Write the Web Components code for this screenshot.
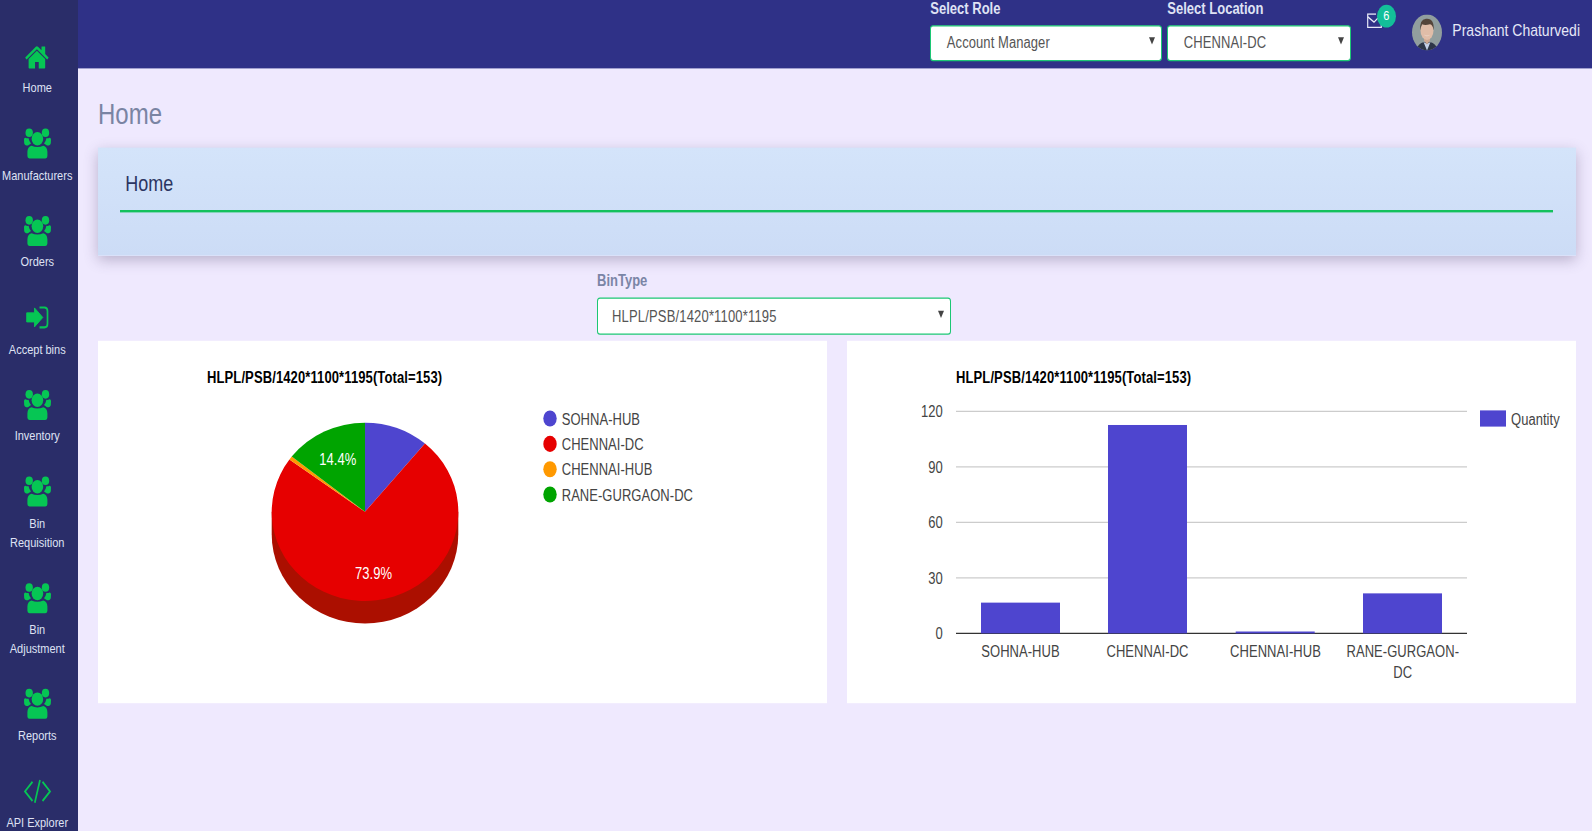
<!DOCTYPE html>
<html>
<head>
<meta charset="utf-8">
<title>Home</title>
<style>
  html, body { margin: 0; height: 100%; overflow: hidden; background: #efe9fe; }
  body { font-family: "Liberation Sans", Arial, sans-serif; }
</style>
</head>
<body>
<app-shell>
  <side-nav slot="nav">
    <nav-item icon="home">Home</nav-item>
    <nav-item icon="users">Manufacturers</nav-item>
    <nav-item icon="users">Orders</nav-item>
    <nav-item icon="signin">Accept bins</nav-item>
    <nav-item icon="users">Inventory</nav-item>
    <nav-item icon="users">Bin<br>Requisition</nav-item>
    <nav-item icon="users">Bin<br>Adjustment</nav-item>
    <nav-item icon="users">Reports</nav-item>
    <nav-item icon="code">API Explorer</nav-item>
  </side-nav>
  <top-bar slot="top" user="Prashant Chaturvedi" count="6">
    <select-box label="Select Role" tone="light" style="width:232px">Account Manager</select-box>
    <select-box label="Select Location" tone="light" style="width:184px">CHENNAI-DC</select-box>
  </top-bar>
  <home-page></home-page>
</app-shell>

<script>
  const ICONS = {
    home: '<svg viewBox="0 0 1792 1792" width="25.8" height="25.8"><path d="M1472 992v480q0 26-19 45t-45 19h-384v-384h-256v384h-384q-26 0-45-19t-19-45v-480q0-1 .5-3t.5-3l575-474 575 474q1 2 1 6zm223-69l-62 74q-8 9-21 11h-3q-13 0-21-7l-692-577-692 577q-12 8-24 7-13-2-21-11l-62-74q-8-10-7-23.500t11-21.500l719-599q32-26 76-26t76 26l244 204v-195q0-14 9-23t23-9h192q14 0 23 9t9 23v408l219 182q10 8 11 21.500t-7 23.500z"/></svg>',
    users: `<svg viewBox="0 0 27 25" width="27" height="25">
      <ellipse cx="5.2" cy="3.6" rx="3.7" ry="3.6"/><ellipse cx="21.5" cy="3.6" rx="3.7" ry="3.6"/>
      <path d="M0 9.2Q0 7.8 1.4 7.8Q3 8.4 4.6 8.2Q5.2 11 7 12.600L4 14.300Q.6 14.400 .2 12.400Z"/>
      <path d="M27 9.200Q27 7.800 25.600 7.800Q24 8.400 22.400 8.200Q21.800 11 20 12.600L23 14.300Q26.400 14.400 26.800 12.400Z"/>
      <ellipse cx="13.4" cy="8.600" rx="5.800" ry="5.600"/>
      <path d="M3.400 19.500Q3.600 15.200 7.500 14.400Q13.400 16.600 19.300 14.400Q23.200 15.200 23.400 19.500V23Q23.400 25 21.400 25H5.400Q3.400 25 3.400 23Z"/></svg>`,
    signin: `<svg viewBox="0 0 27 25" width="27" height="25">
      <path d="M2.700 8.700H10.500V4.600L18.800 12.500L10.500 20.400V16.300H2.700Z" stroke="currentColor" stroke-width=".8" stroke-linejoin="round"/>
      <path d="M15.500 4.200H20.500Q23.500 4.200 23.500 7.200V17.800Q23.500 20.800 20.500 20.800H15.500" fill="none" stroke="currentColor" stroke-width="1.700"/></svg>`,
    code: '<svg viewBox="0 0 27 25" width="27" height="25" fill="none" stroke="currentColor" stroke-width="1.700"><path d="M8.500 4.500L1 12.500L8.500 20.500"/><path d="M18.500 4.500L26 12.500L18.500 20.500"/><path d="M16 3L10.800 22"/></svg>'
  };

  class AppShell extends HTMLElement {
    constructor() {
      super();
      this.attachShadow({ mode: 'open' });
      this.shadowRoot.innerHTML = `
        <style>
          :host {
            display: grid;
            grid-template-columns: 78px 1fr;
            grid-template-rows: 56.500px 1fr;
            width: 1592px;
            height: 692.5px;
            overflow: hidden;
            background: #efe9fe;
            transform: scale(1, 1.2);
            transform-origin: 0 0;
          }
          .nav { grid-row: 1 / 3; min-height: 0; display: flex; }
        </style>
        <div class="nav"><slot name="nav"></slot></div>
        <slot name="top"></slot>
        <slot></slot>
      `;
    }
  }

  class SideNav extends HTMLElement {
    constructor() {
      super();
      this.attachShadow({ mode: 'open' });
      this.shadowRoot.innerHTML = `
        <style>
          :host {
            display: flex;
            flex-direction: column;
            gap: 26.200px;
            width: 78px;
            box-sizing: border-box;
            padding: 35px 3.500px 0 0;
            background: #2a2d69;
            overflow: hidden;
          }
        </style>
        <slot></slot>
      `;
    }
  }

  class NavItem extends HTMLElement {
    constructor() {
      super();
      this.attachShadow({ mode: 'open' });
    }

    connectedCallback() {
      this.shadowRoot.innerHTML = `
        <style>
          :host {
            display: block;
            text-align: center;
            color: #dfe2f4;
            font-size: 11px;
            line-height: 16px;
            flex: none;
            white-space: nowrap;
          }
          .icon {
            display: flex;
            align-items: center;
            justify-content: center;
            height: 25px;
            margin-bottom: 5.300px;
            color: #06c654;
            fill: #06c654;
          }
          .icon svg { overflow: visible; display: block; }
        </style>
        <div class="icon">${ICONS[this.getAttribute('icon')]}</div>
        <slot></slot>
      `;
    }
  }

  class SelectBox extends HTMLElement {
    constructor() {
      super();
      this.attachShadow({ mode: 'open' });
    }

    connectedCallback() {
      const light = this.getAttribute('tone') === 'light';
      this.shadowRoot.innerHTML = `
        <style>
          :host { display: block; box-sizing: border-box; flex: none; }
          .label {
            height: ${light ? 15 : 16}px;
            line-height: ${light ? 15 : 16}px;
            margin-bottom: ${light ? 5.5 : 6}px;
            font-size: 13px;
            font-weight: bold;
            color: ${light ? '#dfe2f4' : '#7b85a6'};
            white-space: nowrap;
          }
          .box {
            display: flex;
            align-items: center;
            justify-content: space-between;
            box-sizing: border-box;
            height: ${light ? 30.5 : 31}px;
            padding: 0 6px 0 ${light ? 15.5 : 14}px;
            background: #fff;
            border: 1.800px solid #1cc774;
            border-radius: 3px;
            font-size: 13px;
            letter-spacing: ${light ? 0.07 : 0.17}px;
            color: #555;
          }
          .arrow {
            width: 0;
            height: 0;
            margin-top: -3px;
            border-left: 3px solid transparent;
            border-right: 3px solid transparent;
            border-top: 6px solid #444;
          }
        </style>
        <div class="label">${this.getAttribute('label')}</div>
        <div class="box"><span><slot></slot></span><span class="arrow"></span></div>
      `;
    }
  }

  class TopBar extends HTMLElement {
    constructor() {
      super();
      this.attachShadow({ mode: 'open' });
    }

    connectedCallback() {
      this.shadowRoot.innerHTML = `
        <style>
          :host {
            display: flex;
            justify-content: flex-end;
            gap: 5px;
            height: 56.500px;
            box-sizing: border-box;
            padding-right: 12px;
            background: #2f3187;
            color: #e6e8f7;
          }
          .mail {
            position: relative;
            width: 15px;
            height: 12.500px;
            margin: 11px 0 0 11px;
            flex: none;
          }
          .mail svg { display: block; }
          .badge {
            position: absolute;
            left: 9.500px;
            top: -7px;
            width: 19px;
            height: 19px;
            border-radius: 50%;
            background: #13bf99;
            color: #fff;
            font-size: 11px;
            line-height: 19px;
            text-align: center;
          }
          .avatar { display: block; flex: none; margin: 11.700px 0 0 25px; }
          .name {
            margin: 16px 0 0 5px;
            line-height: 18px;
            font-size: 14px;
            white-space: nowrap;
          }
        </style>
        <slot></slot>
        <div class="mail">
          <svg viewBox="0 0 15 12.500" width="15" height="12.500" fill="none" stroke="#e6e8f7" stroke-width="1.200">
            <path d="M9 .7H.7V11.800H14.300V7"/><path d="M.9 3L7 7.500L11 4"/>
          </svg>
          <span class="badge">${this.getAttribute('count')}</span>
        </div>
        <svg class="avatar" viewBox="0 0 30 30" width="30" height="30">
          <defs><clipPath id="round"><ellipse cx="15" cy="15" rx="15" ry="15"/></clipPath></defs>
          <g clip-path="url(#round)">
            <rect width="30" height="30" fill="#919e9e"/>
            <path d="M4 30Q6 24 12 23H18Q24 24 26 30Z" fill="#2e3648"/>
            <path d="M11.500 23L15 30L18.500 23L15 24.500Z" fill="#c3cfe6"/>
            <path d="M12 22L15 25L18 22V19H12Z" fill="#cda892"/>
            <ellipse cx="15" cy="13.500" rx="6.500" ry="7.800" fill="#e0bda8"/>
            <path d="M8.300 13.500Q7.300 4 14 3.600Q22.500 2.800 21.700 13.500Q20.700 8.500 18 8.300Q13 9.300 10 8.300Q9 10 8.300 13.500Z" fill="#54453a"/>
            <path d="M11.500 16.500Q15 19 18.500 16.500Q17 18.300 15 18.300Q13 18.300 11.500 16.500Z" fill="#f5ebe4"/>
          </g>
        </svg>
        <div class="name">${this.getAttribute('user')}</div>
      `;
    }
  }

  class PageCard extends HTMLElement {
    constructor() {
      super();
      this.attachShadow({ mode: 'open' });
      this.shadowRoot.innerHTML = `
        <style>
          :host {
            display: block;
            box-sizing: border-box;
            height: 90.200px;
            padding: 0 23px 0 22px;
            background: linear-gradient(180deg, #d4e4fa, #ccdcf6);
            box-shadow: 0 4px 12px rgba(70, 60, 100, .32);
          }
          .title {
            padding: 20px 5.300px 10.600px;
            border-bottom: 2px solid #14c15d;
            font-size: 18px;
            line-height: 21.600px;
            color: #2c3562;
          }
        </style>
        <div class="title"><slot></slot></div>
      `;
    }
  }

  const SLICES = [
    { name: 'SOHNA-HUB', value: 17, color: '#4e45cf' },
    { name: 'CHENNAI-DC', value: 113, color: '#e60000' },
    { name: 'CHENNAI-HUB', value: 1, color: '#ff9900' },
    { name: 'RANE-GURGAON-DC', value: 22, color: '#00a400' }
  ];
  const CHART_TITLE = 'HLPL/PSB/1420*1100*1195(Total=153)';
  const SVG_STYLE = `
    :host { display: block; background: #fff; min-width: 0; }
    svg { display: block; font-family: "Liberation Sans", Arial, sans-serif; font-size: 13px; letter-spacing: .05px; }
    .title { font-weight: bold; fill: #000; letter-spacing: .12px; }
    text { fill: #444; }
  `;

  class PieChart extends HTMLElement {
    constructor() {
      super();
      this.attachShadow({ mode: 'open' });
    }

    connectedCallback() {
      const cx = 267, cy = 142.5, rx = 93.3, ry = 74.3, depth = 18.8;
      const total = SLICES.reduce((sum, s) => sum + s.value, 0);
      let turn = 0;
      const paths = SLICES.map((s) => {
        const from = turn * 2 * Math.PI;
        turn += s.value / total;
        const to = turn * 2 * Math.PI;
        const big = s.value / total > 0.5 ? 1 : 0;
        const x1 = cx + rx * Math.sin(from), y1 = cy - ry * Math.cos(from);
        const x2 = cx + rx * Math.sin(to), y2 = cy - ry * Math.cos(to);
        return `<path fill="${s.color}" d="M${cx} ${cy}L${x1} ${y1}A${rx} ${ry} 0 ${big} 1 ${x2} ${y2}Z"/>`;
      }).join('');
      const legend = SLICES.map((s, i) => {
        const y = 65.2 + i * 21.1;
        return `<ellipse cx="452" cy="${y - 0.4}" rx="6.700" ry="6.700" fill="${s.color}"/>
          <text x="463.700" y="${y + 4.6}">${s.name}</text>`;
      }).join('');
      this.shadowRoot.innerHTML = `
        <style>${SVG_STYLE}</style>
        <svg width="729" height="301.600">
          <text class="title" x="109" y="35.400">${CHART_TITLE}</text>
          <path fill="#ab0f00" d="M${cx - rx} ${cy}V${cy + depth}A${rx} ${ry} 0 0 0 ${cx + rx} ${cy + depth}V${cy}Z"/>
          ${paths}
          <text x="221.300" y="103.800" style="fill:#fff">14.4%</text>
          <text x="257" y="198.400" style="fill:#fff">73.9%</text>
          ${legend}
        </svg>
      `;
    }
  }

  class BarChart extends HTMLElement {
    constructor() {
      super();
      this.attachShadow({ mode: 'open' });
    }

    connectedCallback() {
      const base = 243.8, perUnit = 1.542;
      const ticks = [120, 90, 60, 30, 0].map((t) => {
        const y = base - t * perUnit;
        return `<line x1="109" x2="620" y1="${y}" y2="${y}" stroke="${t ? '#ccc' : '#333'}"/>
          <text x="95.800" y="${y + 4.8}" text-anchor="end">${t}</text>`;
      }).join('');
      const left = [134, 261, 388.7, 516];
      const bars = SLICES.map((s, i) => {
        const h = s.value * perUnit - (s.value > 1 ? 0.6 : 0);
        return `<rect x="${left[i]}" y="${base - h}" width="79" height="${h}" fill="#4e45cf"/>`;
      }).join('');
      this.shadowRoot.innerHTML = `
        <style>${SVG_STYLE}</style>
        <svg width="729" height="301.600">
          <text class="title" x="109" y="35.400">${CHART_TITLE}</text>
          ${ticks}
          ${bars}
          <text x="173.500" y="263.800" text-anchor="middle">SOHNA-HUB</text>
          <text x="300.500" y="263.800" text-anchor="middle">CHENNAI-DC</text>
          <text x="428.500" y="263.800" text-anchor="middle">CHENNAI-HUB</text>
          <text x="555.800" y="263.800" text-anchor="middle">RANE-GURGAON-</text>
          <text x="555.800" y="280.800" text-anchor="middle">DC</text>
          <rect x="633" y="58" width="26" height="13.500" fill="#4e45cf"/>
          <text x="664" y="69.800">Quantity</text>
        </svg>
      `;
    }
  }

  class HomePage extends HTMLElement {
    constructor() {
      super();
      this.attachShadow({ mode: 'open' });
      this.shadowRoot.innerHTML = `
        <style>
          :host {
            display: block;
            box-sizing: border-box;
            min-width: 0;
            padding: 24.300px 16px 0 20px;
          }
          h1 {
            margin: 0 0 13.200px;
            font-size: 24px;
            font-weight: normal;
            line-height: 28.800px;
            color: #7a84a3;
          }
          .filter { width: 354px; margin: 13.100px 0 4.900px 499px; }
          .charts {
            display: grid;
            grid-template-columns: 729px 729px;
            gap: 20px;
            height: 301.600px;
          }
        </style>
        <h1>Home</h1>
        <page-card>Home</page-card>
        <select-box class="filter" label="BinType">HLPL/PSB/1420*1100*1195</select-box>
        <div class="charts">
          <pie-chart></pie-chart>
          <bar-chart></bar-chart>
        </div>
      `;
    }
  }

  customElements.define('app-shell', AppShell);
  customElements.define('side-nav', SideNav);
  customElements.define('nav-item', NavItem);
  customElements.define('select-box', SelectBox);
  customElements.define('top-bar', TopBar);
  customElements.define('page-card', PageCard);
  customElements.define('pie-chart', PieChart);
  customElements.define('bar-chart', BarChart);
  customElements.define('home-page', HomePage);
</script>
</body>
</html>
